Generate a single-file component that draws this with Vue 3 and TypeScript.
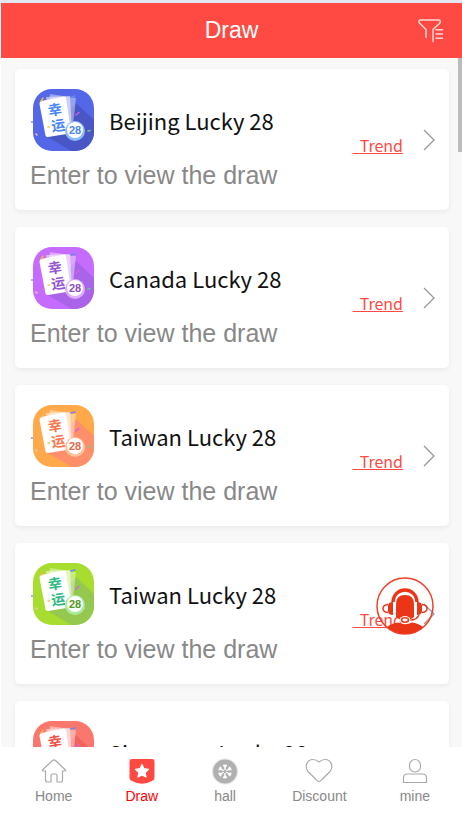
<script setup lang="ts">
interface Lottery {
  id: string
  name: string
  base: string
  shade: string
  ink: string
  digits: string
  ball: string
}

interface Tab {
  id: string
  label: string
}

const lotteries: Lottery[] = [
  { id: 'beijing', name: 'Beijing Lucky 28', base: '#5467e6', shade: '#4956c6', ink: '#4a86f5', digits: '#4a86f5', ball: '#8dbcfb' },
  { id: 'canada', name: 'Canada Lucky 28', base: '#c56bfd', shade: '#a964ea', ink: '#9658cf', digits: '#8d4fc6', ball: '#dcaefb' },
  { id: 'taiwan', name: 'Taiwan Lucky 28', base: '#ffa94b', shade: '#ff8f6b', ink: '#f9764f', digits: '#e2694a', ball: '#ffc3a0' },
  { id: 'taiwan-b', name: 'Taiwan Lucky 28', base: '#a6dd2e', shade: '#94c84f', ink: '#2fb981', digits: '#4f9b1c', ball: '#a9ec9f' },
  { id: 'singapore', name: 'Singapore Lucky 28', base: '#f9776c', shade: '#f4645f', ink: '#f0504a', digits: '#e04a44', ball: '#ffb5ae' },
]

const tabs: Tab[] = [
  { id: 'home', label: 'Home' },
  { id: 'draw', label: 'Draw' },
  { id: 'hall', label: 'hall' },
  { id: 'discount', label: 'Discount' },
  { id: 'mine', label: 'mine' },
]

const active = 'draw'
const spokes = [0, 60, 120, 180, 240, 300]
</script>

<template>
  <div class="screen">
    <header class="bar">
      <h1>Draw</h1>
      <button class="filter" type="button" aria-label="Filter">
        <svg width="26" height="24" viewBox="0 0 26 24" fill="none" stroke="#ffd9d5" stroke-width="1.5" stroke-linejoin="round" stroke-linecap="round">
          <path d="M8 18.500V10.500L1.500 4Q0 1.500 2.500 1H20.500Q23.500 1.500 21.500 4.500L15 10.500V22.500" />
          <path d="M18 10.700H24.500M18 15H24.500M18 19.300H24.500" />
        </svg>
      </button>
    </header>

    <main class="body">
      <div class="list">
        <article v-for="item in lotteries" :key="item.id" class="card">
          <div class="info">
            <div class="head">
              <svg class="logo" width="65" height="65" viewBox="0 0 65 65" aria-hidden="true">
                <clipPath :id="`clip-${item.id}`"><rect x="3" y="1" width="61" height="62" rx="19" /></clipPath>
                <rect x="3" y="1" width="61" height="62" rx="19" :fill="item.base" />
                <path :clip-path="`url(#clip-${item.id})`" d="M46 15L65 33V65H45L16 48Z" :fill="item.shade" />
                <path d="M20 6L46 10L42 46L16 40Z" fill="#fff" opacity=".4" />
                <path d="M16 9L40 8L42 44L18 46Z" fill="#fff" opacity=".5" />
                <path d="M11 13L34 8.500Q35.500 8.500 36 10L41 43Q41 45 39.500 45.500L18 49Q16 49 15.500 47.500L9.500 16Q9.500 13.500 11 13Z" fill="#fff" />
                <g :fill="item.ink" class="glyph" transform="rotate(-8 25 29)">
                  <text x="19" y="27">幸</text>
                  <text x="20" y="43">运</text>
                </g>
                <circle cx="45" cy="43" r="10" :fill="item.ball" />
                <circle cx="45" cy="42" r="8" fill="#fff" />
                <text class="digits" x="45" y="46" text-anchor="middle" :fill="item.digits">28</text>
                <g fill="none" stroke-width="1.500" stroke-linecap="round">
                  <path d="M11 13L13 10" stroke="#f4b63e" />
                  <path d="M41 9L45 8" stroke="#6b87f5" />
                  <path d="M46 27L49 24.500" stroke="#d85fe0" />
                  <path d="M1.500 34H2.500" stroke="#7d8df2" />
                  <path d="M6 46L7 47" stroke="#f8c8b8" />
                  <path d="M18 39H19.500" stroke="#f7c65a" />
                  <path d="M58 43L60 42.500" stroke="#6fd07a" />
                </g>
              </svg>
              <h2>{{ item.name }}</h2>
            </div>
            <p>Enter to view the draw</p>
          </div>
          <a class="trend" href="#trend">&nbsp;&nbsp;Trend</a>
          <svg class="chevron" width="12" height="22" viewBox="0 0 12 22" fill="none" stroke="#999" stroke-width="1.300" aria-hidden="true">
            <path d="M1 1L11 11L1 21" />
          </svg>
        </article>
      </div>
      <span class="thumb" aria-hidden="true"></span>
    </main>

    <button class="support" type="button" aria-label="Customer service">
      <svg width="58" height="58" viewBox="0 0 58 58">
        <clipPath id="support-clip"><circle cx="29" cy="29" r="28" /></clipPath>
        <circle cx="29" cy="29" r="28" fill="none" stroke="#f0402c" stroke-width="1.500" />
        <g fill="#ea3616">
          <path d="M20 27Q20 18 29 18Q38 18 38 27V40Q35 43 29 43Q23 43 20 40Z" />
          <path clip-path="url(#support-clip)" d="M11 50Q16 46 22 45.500Q29 49 36 45.500Q42 46 47 50V58H11Z" />
          <path d="M17 25V38Q12 38 12 34V29Q12 25 17 25ZM41 25V38Q46 38 46 34V29Q46 25 41 25Z" />
        </g>
        <g fill="none" stroke="#ea3616">
          <path d="M17 25C18 9 40 9 41 25" stroke-width="3.500" />
          <path d="M12 27.500Q7 28 7 31.500Q7 35 12 35.500M46 27.500Q51 28 51 31.500Q51 35 46 35.500" stroke-width="1.500" />
          <path d="M43 38Q41 43 34 43" stroke-width="1.500" />
        </g>
        <ellipse cx="29" cy="43" rx="5.500" ry="4" fill="#fff" />
        <ellipse cx="29" cy="43" rx="3.500" ry="2.200" fill="none" stroke="#ea3616" stroke-width="1.500" />
      </svg>
    </button>

    <nav class="tabs">
      <a v-for="tab in tabs" :key="tab.id" :href="`#${tab.id}`" :class="['tab', tab.id, { active: tab.id === active }]">
        <svg width="28" height="28" viewBox="0 0 28 28" fill="none" stroke="#aaa" stroke-width="1.200" stroke-linejoin="round" aria-hidden="true">
          <path v-if="tab.id === 'home'" d="M6 14H3.500Q1.500 14 3 12.500L12.500 3.500Q14 2.300 15.500 3.500L25 12.500Q26.500 14 24.500 14H22.500V23Q22.500 25 20.500 25H17V18.500Q17 17 15.500 17H12.500Q11 17 11 18.500V25H7.500Q5.500 25 5.500 23V14" />
          <template v-else-if="tab.id === 'draw'">
            <path d="M4 2H24Q26.500 2 26.500 4V21Q26.500 23 24 24Q14 29.500 4 24Q1.500 23 1.500 21V4Q1.500 2 4 2Z" fill="#ff4a43" stroke="none" />
            <path d="M14 7.500L16 11.700L20.500 12.300L17.200 15.500L18 20L14 17.900L10 20L10.800 15.500L7.500 12.300L12 11.700Z" fill="#fff" stroke="#fff" />
          </template>
          <template v-else-if="tab.id === 'hall'">
            <circle cx="14" cy="14.500" r="12.500" fill="#b0b0b0" stroke="#e6e6e6" />
            <g v-for="angle in spokes" :key="angle" :transform="`rotate(${angle} 14 14.500)`" stroke="#fff" stroke-width="1.400">
              <path d="M14 13V7.500M12.300 8L14 10.300L15.700 8" />
            </g>
          </template>
          <path v-else-if="tab.id === 'discount'" d="M14 24.500Q12.500 24.500 11 22.500L3 14.500C-.500 10 1.500 2.500 8 2.500Q11 2.500 14 5Q17 2.500 20 2.500C26.500 2.500 28.500 10 25 14.500L17 22.500Q15.500 24.500 14 24.500Z" />
          <template v-else>
            <rect x="8.500" y="2.500" width="11" height="12.500" rx="5.500" />
            <path d="M2.500 25.500V21Q2.500 17 6.500 17H21.500Q25.500 17 25.500 21V25.500Z" />
          </template>
        </svg>
        <span>{{ tab.label }}</span>
      </a>
    </nav>
  </div>
</template>

<style>
body {
  background: #fff;
}
</style>

<style scoped>
.screen {
  position: relative;
  display: flex;
  flex-direction: column;
  box-sizing: border-box;
  height: 100vh;
  border-top: 3px solid #e1e6ef;
  border-left: 1px solid #fff;
  overflow: hidden;
  background: #f8f8f8;
  font-family: "Liberation Sans", Arial, sans-serif;
}

button {
  margin: 0;
  padding: 0;
  border: 0;
  background: none;
}

svg {
  display: block;
  flex: none;
}

.bar {
  display: grid;
  grid-template-columns: 1fr auto 1fr;
  align-items: center;
  flex: none;
  height: 55px;
  padding: 0 18px;
  background: #ff4a43;
  color: #fff;
}

.bar h1 {
  grid-column: 2;
  margin: 0;
  font-size: 23px;
  font-weight: 400;
}

.filter {
  justify-self: end;
}

.body {
  position: relative;
  flex: 1;
  min-height: 0;
}

.list {
  display: flex;
  flex-direction: column;
  gap: 17px;
  box-sizing: border-box;
  height: 100%;
  padding: 11px 13px 11px 14px;
  overflow-y: auto;
  scrollbar-width: none;
}

.thumb {
  position: absolute;
  top: 0;
  right: 0;
  width: 4px;
  height: 94px;
  background: #bcbcbc;
}

.card {
  display: flex;
  align-items: center;
  flex: none;
  box-sizing: border-box;
  height: 141px;
  padding: 0 14px 0 15px;
  border-radius: 5px;
  background: #fff;
  box-shadow: 0 2px 5px rgba(0, 0, 0, 0.06);
}

.info {
  flex: 1;
}

.head {
  display: flex;
  align-items: center;
  gap: 14px;
}

h2 {
  margin: 0;
  color: #111;
  font: 400 22px/36px "Noto Sans CJK SC", sans-serif;
}

.info p {
  margin: 5px 0 0;
  color: #888;
  font-size: 25px;
  line-height: 34px;
}

.glyph {
  font: 700 14px "Noto Sans CJK SC", sans-serif;
}

.digits {
  font: 700 11px "Liberation Sans", sans-serif;
}

.trend {
  margin: 11px 20px 0 0;
  color: #ff4a43;
  font: 400 16px/26px "Noto Sans CJK SC", sans-serif;
  text-decoration: underline;
}

.support {
  position: absolute;
  right: 28px;
  bottom: 178px;
}

.tabs {
  display: flex;
  justify-content: space-between;
  flex: none;
  box-sizing: border-box;
  height: 66px;
  padding: 10px 32px 0 34px;
  background: #fff;
}

.tab {
  display: flex;
  flex-direction: column;
  align-items: center;
  gap: 2px;
  color: #888;
  font-size: 14px;
  line-height: 18px;
  text-decoration: none;
}

.active {
  color: #f00;
}
</style>
